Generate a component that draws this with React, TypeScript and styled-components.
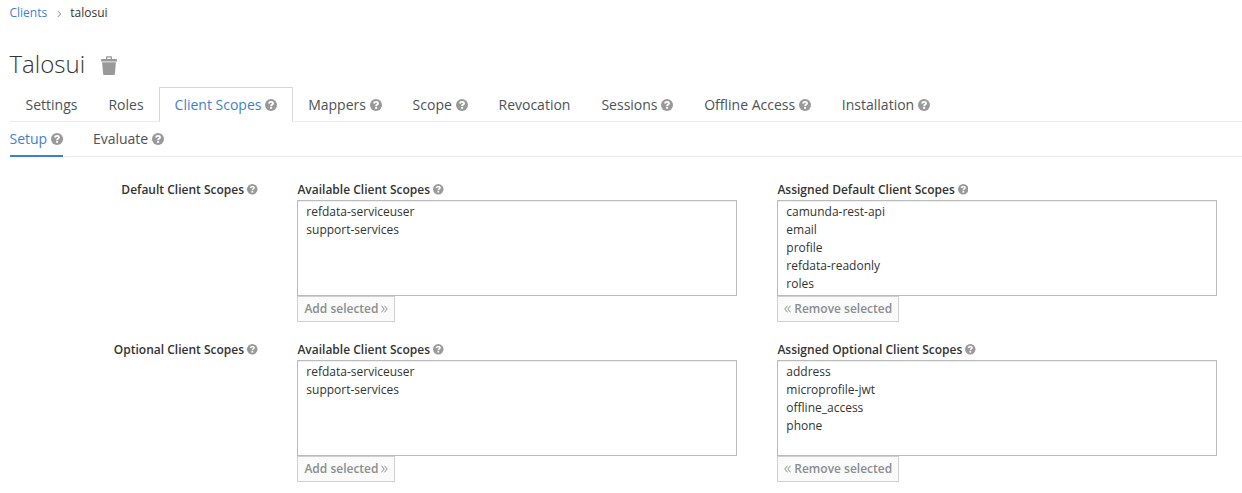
import React from "react";
import styled, { createGlobalStyle } from "styled-components";

const GlobalStyle = createGlobalStyle`
  *, *::before, *::after { box-sizing: border-box; }
  body {
    margin: 0;
    background: #fff;
    color: #333;
    font-family: "Open Sans", "Noto Sans", sans-serif;
    font-size: 12px;
    line-height: 18px;
    overflow: hidden;
  }
`;

const Page = styled.main`
  height: 493px;
  padding: 4px 0 0 9.5px;
  overflow: hidden;
`;

const Breadcrumb = styled.nav`
  display: flex;
  align-items: center;
  height: 18px;
`;

const BreadcrumbLink = styled.a`
  color: #3f7fcf;
  text-decoration: none;
`;

const Chevron = styled.svg`
  width: 5px;
  height: 8px;
  margin: 1px 8.5px 0 9.5px;
`;

const TitleRow = styled.header`
  display: flex;
  align-items: center;
  height: 33px;
  margin-top: 26px;
`;

const Title = styled.h1`
  margin: 0;
  padding-bottom: 1px;
  font-size: 24px;
  font-weight: 300;
  line-height: 32px;
`;

const TrashButton = styled.button`
  display: flex;
  margin: 2px 0 0 15.5px;
  padding: 0;
  border: 0;
  background: none;
`;

const TabBar = styled.ul`
  display: flex;
  height: 35px;
  margin: 0;
  padding: 0;
  list-style: none;
  border-bottom: 1px solid #ebebeb;
`;

const Tabs = styled(TabBar)`
  margin-top: 6px;
  padding-left: 1px;
`;

const Tab = styled.li<{ $active?: boolean }>`
  display: flex;
  align-items: center;
  height: 35px;
  margin-left: ${(p) => (p.$active ? "-0.5px" : "-1px")};
  padding: 0 15px 0 ${(p) => (p.$active ? "14.5px" : "15px")};
  border: 1px solid ${(p) => (p.$active ? "#d6d6d6" : "transparent")};
  border-bottom-color: ${(p) => (p.$active ? "#fff" : "transparent")};
  color: ${(p) => (p.$active ? "#3f7fcf" : "#4d5258")};
  font-size: 14px;
  white-space: nowrap;
`;

const SubTabs = styled(TabBar)`
  gap: 30px;
`;

const SubTab = styled.li<{ $active?: boolean }>`
  display: flex;
  align-items: center;
  height: 35px;
  border-bottom: 2px solid ${(p) => (p.$active ? "#3f7fcf" : "transparent")};
  color: ${(p) => (p.$active ? "#3f7fcf" : "#4d5258")};
  font-size: 14px;
`;

const Help = styled.svg<{ $small?: boolean }>`
  flex: none;
  width: ${(p) => (p.$small ? 10.5 : 12)}px;
  height: ${(p) => (p.$small ? 10.5 : 12)}px;
  margin-left: ${(p) => (p.$small ? 3 : 3.7)}px;
`;

const FormGroup = styled.section`
  display: grid;
  grid-template-columns: 247.5px 440px 440px;
  column-gap: 40px;
  height: 142px;
  margin-bottom: 18px;
`;

const Form = styled.form`
  padding-top: 23px;
`;

const Label = styled.div<{ $end?: boolean }>`
  display: flex;
  align-items: center;
  justify-content: ${(p) => (p.$end ? "flex-end" : "flex-start")};
  height: 20px;
  margin-right: ${(p) => (p.$end ? "-0.5px" : "0")};
  padding: 0 0 1px ${(p) => (p.$end ? 0 : 0.4)}px;
  font-weight: 600;
`;

const Column = styled.div`
  display: flex;
  flex-direction: column;
  align-items: flex-start;
`;

const ScopeList = styled.ul`
  width: 440px;
  height: 96px;
  margin: 0;
  padding: 2px 8.3px;
  border: 1px solid #bbb;
  box-shadow: inset 0 1px 1px rgba(3, 3, 3, 0.075);
  list-style: none;
`;

const ScopeItem = styled.li`
  height: 18px;
`;

const ActionButton = styled.button`
  display: flex;
  align-items: center;
  gap: 2.9px;
  height: 26px;
  padding: 0 5.8px 0 6.4px;
  border: 1px solid #d1d1d1;
  background: #fafafa;
  color: #8b8d8f;
  font: 600 12px/18px "Open Sans", "Noto Sans", sans-serif;
`;

const Angles = styled.svg`
  width: 7px;
  height: 8px;
`;

const HelpIcon = ({ small }: { small?: boolean }) => (
  <Help $small={small} viewBox="0 0 12 12">
    <circle cx="6" cy="6" r="6" fill="#999" />
    <path d="M3.9 4.5C4.2 3.3 4.9 2.9 6 2.9c1.2 0 2 .6 2 1.5C8 5.7 6.1 5.5 6.1 7.2" fill="none" stroke="#fff" strokeWidth="1.9" />
    <path d="M5.1 8h2v1.8h-2z" fill="#fff" />
  </Help>
);

const TrashIcon = () => (
  <svg width="16" height="19" viewBox="0 0 16 19" fill="#999">
    <path fillRule="evenodd" d="M5 3V1.2Q5 .3 5.9 .3h4.2q.9 0 .9.9V3h4.2q.8 0 .8.8V5.5H0V3.8Q0 3 .8 3zM6.3 3h3.4V1.5H6.3z" />
    <path d="M1.1 6.3h13.8l-1 11.7q-.1.9-1.1.9H3.2q-1 0-1.1-.9z" />
  </svg>
);

const AnglesIcon = ({ left }: { left?: boolean }) => (
  <Angles viewBox="0 0 7 8" fill="none" stroke="#8b8d8f" strokeWidth="1">
    <path d={left ? "M3.5 .7 .8 4l2.7 3.3M6.5 .7 3.8 4l2.7 3.3" : "M.5 .7l2.7 3.3L.5 7.3M3.5 .7l2.7 3.3-2.7 3.3"} />
  </Angles>
);

const tabs = [
  { label: "Settings" },
  { label: "Roles" },
  { label: "Client Scopes", help: true, active: true },
  { label: "Mappers", help: true },
  { label: "Scope", help: true },
  { label: "Revocation" },
  { label: "Sessions", help: true },
  { label: "Offline Access", help: true },
  { label: "Installation", help: true },
];

const groups = [
  {
    kind: "Default",
    available: ["refdata-serviceuser", "support-services"],
    assigned: ["camunda-rest-api", "email", "profile", "refdata-readonly", "roles"],
  },
  {
    kind: "Optional",
    available: ["refdata-serviceuser", "support-services"],
    assigned: ["address", "microprofile-jwt", "offline_access", "phone"],
  },
];

const ScopeColumn = ({ title, items, children }: { title: string; items: string[]; children: React.ReactNode }) => (
  <Column>
    <Label>
      {title}
      <HelpIcon small />
    </Label>
    <ScopeList>
      {items.map((item) => (
        <ScopeItem key={item}>{item}</ScopeItem>
      ))}
    </ScopeList>
    <ActionButton type="button" disabled>
      {children}
    </ActionButton>
  </Column>
);

export default function App() {
  return (
    <>
      <GlobalStyle />
      <Page>
        <Breadcrumb>
          <BreadcrumbLink>Clients</BreadcrumbLink>
          <Chevron viewBox="0 0 5 8" fill="none" stroke="#888">
            <path d="M.7 1l3 3-3 3" />
          </Chevron>
          <span>talosui</span>
        </Breadcrumb>
        <TitleRow>
          <Title>Talosui</Title>
          <TrashButton type="button" aria-label="Delete">
            <TrashIcon />
          </TrashButton>
        </TitleRow>
        <Tabs>
          {tabs.map((tab) => (
            <Tab key={tab.label} $active={tab.active}>
              {tab.label}
              {tab.help && <HelpIcon />}
            </Tab>
          ))}
        </Tabs>
        <SubTabs>
          <SubTab $active>
            Setup
            <HelpIcon />
          </SubTab>
          <SubTab>
            Evaluate
            <HelpIcon />
          </SubTab>
        </SubTabs>
        <Form>
          {groups.map((group) => (
            <FormGroup key={group.kind}>
              <Label $end>
                {group.kind} Client Scopes
                <HelpIcon small />
              </Label>
              <ScopeColumn title="Available Client Scopes" items={group.available}>
                Add selected
                <AnglesIcon />
              </ScopeColumn>
              <ScopeColumn title={`Assigned ${group.kind} Client Scopes`} items={group.assigned}>
                <AnglesIcon left />
                Remove selected
              </ScopeColumn>
            </FormGroup>
          ))}
        </Form>
      </Page>
    </>
  );
}
